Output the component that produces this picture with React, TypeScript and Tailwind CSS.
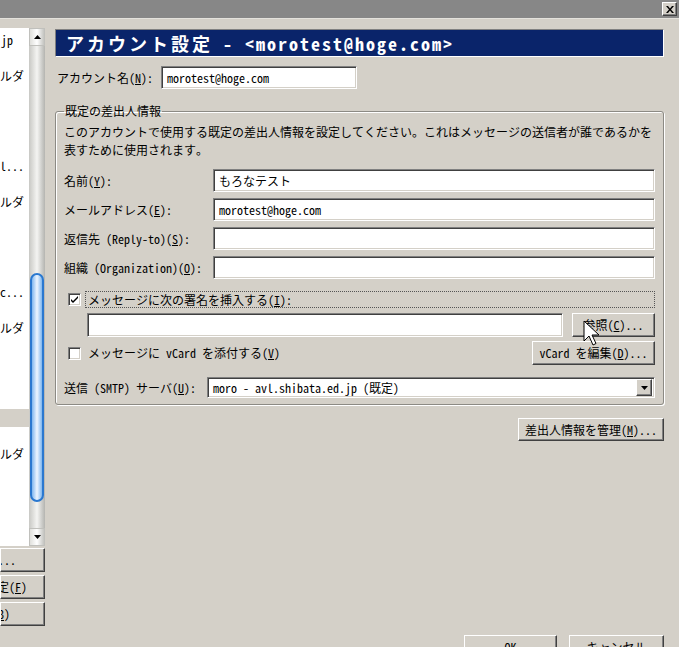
import type { ReactNode } from "react";

const raised =
  "bg-[#d4d0c8] border border-t-white border-l-white border-r-[#404040] border-b-[#404040] shadow-[inset_-1px_-1px_0_#808080]";
const sunken =
  "bg-white border border-t-[#808080] border-l-[#808080] border-r-white border-b-white shadow-[inset_1px_1px_0_#404040,inset_-1px_-1px_0_#d4d0c8]";

// 左側のアカウントツリー (右端だけ見えている)
const treeRows: { text?: string; pr?: number; selected?: boolean }[] = [];
for (let i = 0; i < 28; i++) treeRows.push({});
treeRows[0] = { text: "morotest@hoge.jp", pr: 16 };
treeRows[2] = { text: "送信控えと特別なフォルダ", pr: 5 };
treeRows[7] = { text: "moro@mail.l...", pr: 5 };
treeRows[9] = { text: "送信控えと特別なフォルダ", pr: 5 };
treeRows[14] = { text: "moro@avl.c...", pr: 5 };
treeRows[16] = { text: "送信控えと特別なフォルダ", pr: 5 };
treeRows[21] = { selected: true };
treeRows[23] = { text: "送信控えと特別なフォルダ", pr: 5 };

const Button = ({ className = "", children }: { className?: string; children: ReactNode }) => (
  <div className={`${raised} flex items-center justify-center text-[12px] leading-none ${className}`}>
    {children}
  </div>
);

const Field = ({ className = "", value }: { className?: string; value?: string }) => (
  <div className={`${sunken} flex items-center pl-[5px] text-[12px] leading-none ${className}`}>
    {value}
  </div>
);

const CheckBox = ({ checked }: { checked?: boolean }) => (
  <div className={`${sunken} w-[13px] h-[13px] flex items-center justify-center shrink-0`}>
    {checked && (
      <svg width="9" height="9" viewBox="0 0 9 9">
        <path d="M1 4 L3 6 L8 1 L8 3 L3 8 L1 6 Z" fill="#000" />
      </svg>
    )}
  </div>
);

const Row = ({ label, value }: { label: ReactNode; value?: string }) => (
  <div className="flex items-center h-[23px]">
    <div className="w-[149px] text-[12px] whitespace-nowrap">{label}</div>
    <Field className="w-[442px] h-[23px]" value={value} />
  </div>
);

const ScrollBar = () => (
  <div className="w-[16px] h-full flex flex-col bg-gradient-to-r from-[#c8c8c4] via-[#f4f4f2] to-[#b4b4b0]">
    <div className="h-[18px] flex items-center justify-center border border-[#c0c0bc] bg-gradient-to-r from-[#e0e0dc] via-white to-[#c4c4c0]">
      <svg width="7" height="4" viewBox="0 0 7 4">
        <path d="M3.5 0 L7 4 L0 4 Z" fill="#000" />
      </svg>
    </div>
    <div className="h-[227px]" />
    <div className="h-[229px] mx-[1px] rounded-full border-2 border-[#2a78d0] bg-gradient-to-r from-[#7fb6ee] via-[#eef6ff] to-[#7fb6ee]" />
    <div className="flex-1" />
    <div className="h-[18px] flex items-center justify-center border border-[#c0c0bc] bg-gradient-to-r from-[#e0e0dc] via-white to-[#c4c4c0]">
      <svg width="7" height="4" viewBox="0 0 7 4">
        <path d="M0 0 L7 0 L3.5 4 Z" fill="#000" />
      </svg>
    </div>
  </div>
);

const LeftPane = () => (
  <div className="w-[45px] shrink-0 pt-[9px] flex flex-col">
    <div className="h-[518px] flex">
      <div className="w-[29px] bg-white pt-[3px] overflow-hidden">
        {treeRows.map((r, i) => (
          <div
            key={i}
            className={`h-[18px] flex items-center justify-end overflow-hidden whitespace-nowrap text-[12px] ${
              r.selected ? "bg-[#d4d0c8]" : ""
            }`}
            style={{ paddingRight: r.pr ?? 0 }}
          >
            {r.text}
          </div>
        ))}
      </div>
      <ScrollBar />
    </div>
    <div className="mt-[2px] flex flex-col gap-[3px]">
      <Button className="h-[24px] !justify-end pr-[28px] overflow-hidden whitespace-nowrap">
        アカウント操作...
      </Button>
      <Button className="h-[24px] !justify-end pr-[17px] overflow-hidden whitespace-nowrap">
        既定に設定(<u>F</u>)
      </Button>
      <Button className="h-[24px] !justify-end pr-[34px] overflow-hidden whitespace-nowrap">
        削除(<u>B</u>)
      </Button>
    </div>
  </div>
);

export default function App() {
  return (
    <div className="relative w-[679px] h-[647px] overflow-hidden bg-[#d4d0c8] text-black font-['Noto_Sans_Mono_CJK_JP','Noto_Sans_CJK_JP',sans-serif]">
      {/* タイトルバー */}
      <div className="h-[19px] bg-[#878787] border-b border-[#e4e2dc] flex justify-end items-start pt-[2px] pr-[2px]">
        <div className={`${raised} w-[15px] h-[14px] flex items-center justify-center`}>
          <svg width="8" height="7" viewBox="0 0 8 7">
            <path d="M0 0 H2 L4 2.5 L6 0 H8 L5 3.5 L8 7 H6 L4 4.5 L2 7 H0 L3 3.5 Z" fill="#000" />
          </svg>
        </div>
      </div>

      <div className="flex">
        <LeftPane />

        <div className="ml-[10px] w-[609px] pt-[10px] flex flex-col">
          {/* ページ見出し */}
          <div className="h-[28px] bg-[#0a246a] border border-t-[#808080] border-l-[#808080] border-r-white border-b-white flex items-center pl-[10px] text-white font-bold text-[18px] tracking-[2px] whitespace-nowrap">
            <span className="tracking-[3px]">アカウント設定</span>
            <span className="ml-[10px]">- &lt;morotest@hoge.com&gt;</span>
          </div>

          <div className="mt-[9px] flex items-center h-[23px]">
            <div className="w-[106px] pl-[2px] text-[12px] whitespace-nowrap">
              アカウント名(<u>N</u>):
            </div>
            <Field className="w-[196px] h-[23px]" value="morotest@hoge.com" />
          </div>

          <fieldset className="mt-[15px] border border-[#8c8a84] rounded-[3px] shadow-[inset_1px_1px_0_white,1px_1px_0_white] px-[8px] pb-[6px]">
            <legend className="px-[1px] text-[12px] leading-[14px]">既定の差出人情報</legend>

            <p className="pt-[5px] text-[12px] leading-[18px] whitespace-nowrap">
              このアカウントで使用する既定の差出人情報を設定してください。これはメッセージの送信者が誰であるかを
              <br />
              表すために使用されます。
            </p>

            <div className="mt-[10px] flex flex-col gap-[6px]">
              <Row label={<>名前(<u>Y</u>):</>} value="もろなテスト" />
              <Row label={<>メールアドレス(<u>E</u>):</>} value="morotest@hoge.com" />
              <Row label={<>返信先 (Reply-to)(<u>S</u>):</>} />
              <Row label={<>組織 (Organization)(<u>O</u>):</>} />
            </div>

            {/* 署名 */}
            <div className="mt-[12px] flex items-center h-[17px]">
              <div className="ml-[4px]">
                <CheckBox checked />
              </div>
              <div className="ml-[4px] flex-1 h-[17px] border border-dotted border-[#555] flex items-center pl-[2px] text-[12px] whitespace-nowrap">
                メッセージに次の署名を挿入する(<u>I</u>):
              </div>
            </div>
            <div className="mt-[5px] flex items-center pl-[23px]">
              <Field className="w-[476px] h-[24px]" />
              <Button className="ml-[9px] w-[83px] h-[24px]">
                参照(<u>C</u>)...
              </Button>
            </div>

            {/* vCard */}
            <div className="mt-[4px] flex items-center h-[24px]">
              <div className="ml-[4px]">
                <CheckBox />
              </div>
              <div className="ml-[7px] flex-1 text-[12px] whitespace-nowrap">
                メッセージに vCard を添付する(<u>V</u>)
              </div>
              <Button className="w-[123px] h-[24px]">
                vCard を編集(<u>D</u>)...
              </Button>
            </div>

            {/* 送信サーバ */}
            <div className="mt-[12px] flex items-center h-[21px]">
              <div className="w-[143px] text-[12px] whitespace-nowrap">
                送信 (SMTP) サーバ(<u>U</u>):
              </div>
              <div className={`${sunken} w-[448px] h-[21px] flex items-center pl-[5px] pr-[2px] text-[12px]`}>
                <span className="flex-1 whitespace-nowrap">moro - avl.shibata.ed.jp (既定)</span>
                <div className={`${raised} w-[16px] h-[17px] flex items-center justify-center`}>
                  <svg width="7" height="4" viewBox="0 0 7 4">
                    <path d="M0 0 L7 0 L3.5 4 Z" fill="#000" />
                  </svg>
                </div>
              </div>
            </div>
          </fieldset>

          <div className="mt-[13px] flex justify-end">
            <Button className="w-[146px] h-[23px]">
              差出人情報を管理(<u>M</u>)...
            </Button>
          </div>

          <div className="mt-[194px] flex justify-end gap-[12px]">
            <Button className="w-[93px] h-[23px]">OK</Button>
            <Button className="w-[95px] h-[23px]">キャンセル</Button>
          </div>
        </div>
      </div>

      {/* マウスカーソル */}
      <svg className="absolute left-[583px] top-[320px]" width="18" height="27" viewBox="0 0 18 27">
        <path d="M1 1 V21 L6 16 L10 25 L13 23.5 L9 15 H16 Z" fill="#fff" stroke="#000" strokeWidth="1" strokeLinejoin="miter" />
      </svg>
    </div>
  );
}
